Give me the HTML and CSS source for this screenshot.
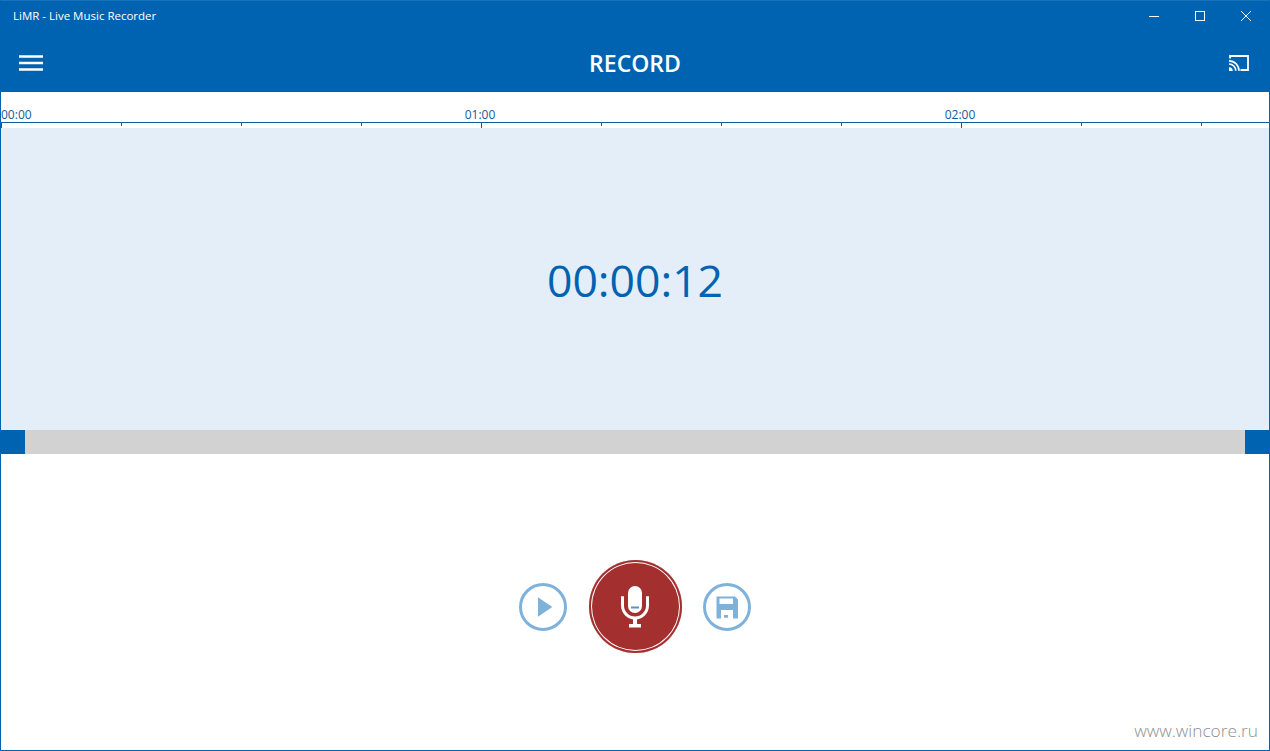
FILE: index.html
```html
<!DOCTYPE html>
<html lang="en">
<head>
    <meta charset="UTF-8">
    <meta name="viewport" content="width=device-width, initial-scale=1.0">
    <title>LiMR - Live Music Recorder</title>
    <link rel="stylesheet" href="styles.css">
</head>
<body>
    <div class="window">
        <div class="titlebar">
            <span class="app-name">LiMR - Live Music Recorder</span>
            <div class="window-buttons">
                <svg width="46" height="30" viewBox="0 0 46 30"><path d="M18 15.5h10" stroke="#fff" fill="none"/></svg>
                <svg width="46" height="30" viewBox="0 0 46 30"><rect x="18.5" y="10.5" width="9" height="9" stroke="#fff" fill="none"/></svg>
                <svg width="46" height="30" viewBox="0 0 46 30"><path d="M18 10l10 10M28 10l-10 10" stroke="#fff" fill="none"/></svg>
            </div>
        </div>
        <header class="appbar">
            <svg class="menu-icon" width="24" height="16" viewBox="0 0 24 16">
                <path d="M0 1.5h24M0 8h24M0 14.5h24" stroke="#fff" stroke-width="2.5" fill="none"/>
            </svg>
            <h1>RECORD</h1>
            <svg class="cast-icon" width="20" height="16" viewBox="0 0 20 16">
                <path d="M1 3.5V1h18v14h-7.500" stroke="#fff" stroke-width="1.8" fill="none"/>
                <path d="M0 5.8a10 10 0 0 1 10 10M0 9a6.800 6.800 0 0 1 6.800 6.800" stroke="#fff" stroke-width="1.7" fill="none"/>
                <path d="M0 12.2a3.800 3.800 0 0 1 3.800 3.800H0z" fill="#fff"/>
            </svg>
        </header>
        <div class="ruler">
            <div class="ruler-labels">
                <span class="first">00:00</span>
                <span>01:00</span>
                <span>02:00</span>
            </div>
            <div class="ruler-ticks">
                <i class="major"></i><i></i><i></i><i></i>
                <i class="major"></i><i></i><i></i><i></i>
                <i class="major"></i><i></i><i></i>
            </div>
        </div>
        <div class="wave-panel">
            <span class="timer">00:00:12</span>
        </div>
        <div class="trim-bar">
            <span class="handle"></span>
            <span class="handle"></span>
        </div>
        <div class="controls">
            <button class="round-btn">
                <svg width="48" height="48" viewBox="0 0 48 48">
                    <circle cx="24" cy="24" r="22.5" stroke="#7fb2db" stroke-width="3" fill="none"/>
                    <path d="M19 14.3L33.300 24 19 33.700z" fill="#7fb2db"/>
                </svg>
            </button>
            <button class="record-btn">
                <svg width="32" height="44" viewBox="0 0 32 44">
                    <rect x="9" y="1" width="14" height="27" rx="7" fill="#fff"/>
                    <path d="M12 22.5h8" stroke="#5b93c4" stroke-width="2" fill="none"/>
                    <path d="M3.5 12v8.500a12.500 12.500 0 0 0 25 0V12" stroke="#fff" stroke-width="3" fill="none"/>
                    <path d="M2 12.5h3M27 12.500h3" stroke="#fff" stroke-width="2.5" fill="none"/>
                    <rect x="14" y="32" width="4" height="8" fill="#fff"/>
                    <rect x="10" y="39" width="12" height="3.5" fill="#fff"/>
                </svg>
            </button>
            <button class="round-btn">
                <svg width="48" height="48" viewBox="0 0 48 48">
                    <circle cx="24" cy="24" r="22.5" stroke="#7fb2db" stroke-width="3" fill="none"/>
                    <path fill-rule="evenodd" fill="#7fb2db" d="M13.5 13.5H32l3 3v19H13.500zM16.500 15.500V21H30v-5.500zM18 27v8.500h12V27zM21 32h4v2.800h-4z"/>
                </svg>
            </button>
        </div>
        <span class="watermark">www.wincore.ru</span>
    </div>
</body>
</html>
```

FILE: styles.css
```css
html, body {
    margin: 0;
    height: 100%;
    overflow: hidden;
}

body {
    font-family: "Open Sans", "Noto Sans", sans-serif;
    background-color: #fff;
}

.window {
    position: relative;
    box-sizing: border-box;
    height: 751px;
    border: 1px solid #0063b1;
    border-top-color: #1a72b8;
    display: flex;
    flex-direction: column;
}

.titlebar {
    height: 29px;
    flex-shrink: 0;
    background-color: #0063b1;
    color: #fff;
    display: flex;
    align-items: center;
    justify-content: space-between;
    padding-left: 12px;
}

.app-name {
    font-size: 11.5px;
}

.window-buttons {
    display: flex;
}

.appbar {
    height: 62px;
    box-sizing: border-box;
    flex-shrink: 0;
    background-color: #0063b1;
    display: flex;
    align-items: center;
    justify-content: space-between;
    padding: 3px 20px 0 18px;
}

.appbar h1 {
    margin: 0 2px 0 0;
    color: #fff;
    font-size: 23px;
    font-weight: 600;
}

.ruler {
    height: 36px;
    flex-shrink: 0;
    color: #0f5c9c;
    overflow: hidden;
}

.ruler-labels {
    height: 31px;
    box-sizing: border-box;
    border-bottom: 1px solid #0f5c9c;
    display: flex;
    align-items: flex-end;
    font-size: 12px;
    line-height: 14px;
}

.ruler-labels span {
    width: 480px;
    flex-shrink: 0;
    text-align: center;
}

.ruler-labels .first {
    width: 239px;
    text-align: left;
}

.ruler-ticks {
    display: flex;
}

.ruler-ticks i {
    box-sizing: border-box;
    width: 120px;
    height: 3px;
    flex-shrink: 0;
    border-left: 1px solid #0f5c9c;
}

.ruler-ticks .major {
    height: 5px;
}

.wave-panel {
    height: 302px;
    flex-shrink: 0;
    background-color: #e4eef8;
    display: flex;
    align-items: center;
    justify-content: center;
}

.timer {
    color: #0063b1;
    font-size: 44.5px;
}

.trim-bar {
    height: 24px;
    flex-shrink: 0;
    background-color: #d2d2d2;
    display: flex;
    justify-content: space-between;
}

.handle {
    width: 24px;
    background-color: #0063b1;
}

.controls {
    flex: 1;
    display: flex;
    align-items: center;
    justify-content: center;
    gap: 21.5px;
    padding-top: 9px;
}

.controls button {
    border: none;
    padding: 0;
    background: none;
    display: flex;
    align-items: center;
    justify-content: center;
}

.controls .record-btn {
    width: 93px;
    height: 93px;
    border-radius: 50%;
    background-color: #a32f2f;
    box-shadow: inset 0 0 0 2px #a32f2f, inset 0 0 0 3px #fff;
}

.watermark {
    position: absolute;
    right: 11px;
    bottom: 8px;
    color: #8f8f8f;
    font-size: 17.3px;
    font-weight: 300;
}
```
